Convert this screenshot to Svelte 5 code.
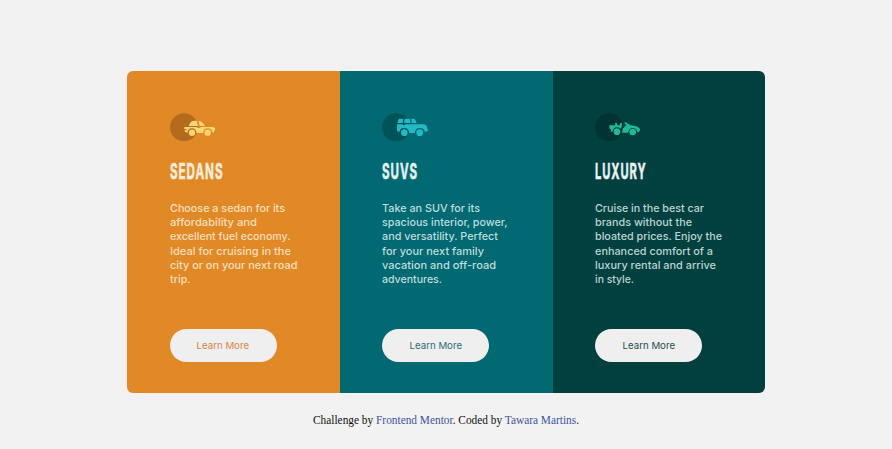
<script>
  const cards = [
    {
      name: 'sedans', title: 'SEDANS', titleWidth: 53.5,
      lines: [['Choose a sedan for its', 115], ['affordability and', 87], ['excellent fuel economy.', 120.5], ['Ideal for cruising in the', 121], ['city or on your next road', 127.5], ['trip.', 20.5]]
    },
    {
      name: 'suvs', title: 'SUVS', titleWidth: 36,
      lines: [['Take an SUV for its', 98], ['spacious interior, power,', 125.5], ['and versatility. Perfect', 116], ['for your next family', 102], ['vacation and off-road', 114], ['adventures.', 60]]
    },
    {
      name: 'luxury', title: 'LUXURY', titleWidth: 51.5,
      lines: [['Cruise in the best car', 109], ['brands without the', 97], ['bloated prices. Enjoy the', 127], ['enhanced comfort of a', 118], ['luxury rental and arrive', 121], ['in style.', 39]]
    }
  ];

  // Scales a run of text horizontally to its intended measure.
  function fit(node, width) {
    const natural = node.getBoundingClientRect().width;
    node.style.transform = `scaleX(${width / natural})`;
  }
</script>

<div class="page">
  <main>
    {#each cards as card}
      <section class={card.name}>
        <svg class="icon" viewBox="30 24 137 86" aria-hidden="true">
          <circle class="disc" cx="72" cy="67" r="42" />
          {#if card.name === 'sedans'}
            <path d="M86 63Q91 47 103 47H110L114 63ZM115 47Q127 48 135 63H119ZM73 66H111L115 70H119L122 66H155Q165 66 166 71L161 83H158Q155 70 143 70Q131 70 129 84H110Q108 70 96 70Q84 70 82 83L74 80V76H79V72H73Z" />
            <circle cx="96" cy="83" r="9.5" /><circle cx="143" cy="83" r="9.5" />
          {:else if card.name === 'suvs'}
            <path d="M80 41H94L92 54H76ZM98 41H113L116 54H96ZM117 41H126Q130 42 134 54H120ZM75 58H91L94 61H97L99 58H155Q164 59 165 65V71H168V77L160 82Q156 69 143 69Q130 69 128 84H112Q109 69 97 69Q84 69 82 81L75 78Z" />
            <circle cx="97" cy="83" r="10" /><circle cx="143" cy="83" r="10" />
          {:else}
            <path d="M90 54L95 53L98 61H104L106 53L111 54L110 67L107 71Q102 67 96 67Q86 67 82 80L76 79L79 74L73 70V61H91ZM120 51L137 61Q160 62 166 74L161 81H157Q154 69 143 69Q132 69 129 83H112Q111 77 113 71L124 60L118 54Z" />
            <circle cx="96" cy="80" r="10" /><circle cx="143" cy="81" r="10" />
          {/if}
        </svg>
        <h1><span use:fit={card.titleWidth}>{card.title}</span></h1>
        <p>
          {#each card.lines as [text, width]}
            <span class="line"><span class="run" use:fit={width}>{text}</span></span>
          {/each}
        </p>
        <button><span class="run label" use:fit={52.5}>Learn More</span></button>
      </section>
    {/each}
  </main>
  <footer><span class="run" use:fit={266}>Challenge by <a href="#mentor">Frontend Mentor</a>. Coded by <a href="#author">Tawara Martins</a>.</span></footer>
</div>

<style>
  :global(body) { margin: 0; background: #f2f2f2; }
  .page {
    box-sizing: border-box;
    height: 449px;
    padding-top: 71px;
    overflow: hidden;
    background: #f2f2f2;
  }
  main {
    display: flex;
    width: 638px;
    height: 322px;
    margin-left: 127.4px;
    border-radius: 6px;
    overflow: hidden;
  }
  section {
    flex: 1;
    display: flex;
    flex-direction: column;
    align-items: flex-start;
    box-sizing: border-box;
    padding: 42px 0 0 42.2px;
    font-family: Inter, "Noto Sans", sans-serif;
  }
  .sedans { background: #e28927; --disc: #b36c1e; --car: #ffd473; --copy: #f9dfbb; --title: #fbeddb; --label: #d98543; }
  .suvs { background: #006971; --disc: #005359; --car: #26b9c5; --copy: #bfdcde; --title: #e4f2f3; --label: #2b6d75; }
  .luxury { background: #004140; --disc: #003332; --car: #20b996; --copy: #bdd3d1; --title: #e9f2f1; --label: #294d4c; }
  .icon { width: 45.7px; height: 28.7px; fill: var(--car); }
  .disc { fill: var(--disc); }
  h1 {
    margin: 15.6px 0 0;
    height: 28px;
    font: bold 22px/28px Inter, sans-serif;
    color: var(--title);
  }
  h1 span {
    display: inline-block;
    transform-origin: left center;
    letter-spacing: 1.8px;
    -webkit-text-stroke: 0.6px var(--title);
  }
  p {
    margin: 15.7px 0 0;
    font-size: 11px;
    font-weight: 500;
    line-height: 14.2px;
    color: var(--copy);
  }
  .line { display: block; height: 14.2px; white-space: nowrap; }
  .run { display: inline-block; transform-origin: left center; white-space: nowrap; }
  .label { transform-origin: center; }
  button {
    margin: 42.8px 0 0;
    width: 107px;
    height: 33.5px;
    padding: 0;
    border: 0;
    border-radius: 17px;
    background: #efefef;
    color: var(--label);
    font: 9.5px Inter, "Noto Sans", sans-serif;
    white-space: nowrap;
  }
  footer {
    margin-top: 20px;
    padding-left: 313px;
    font: 11.5px/15px "Liberation Serif", serif;
    color: #111;
    white-space: nowrap;
  }
  a { color: #3e52a3; text-decoration: none; }
</style>
